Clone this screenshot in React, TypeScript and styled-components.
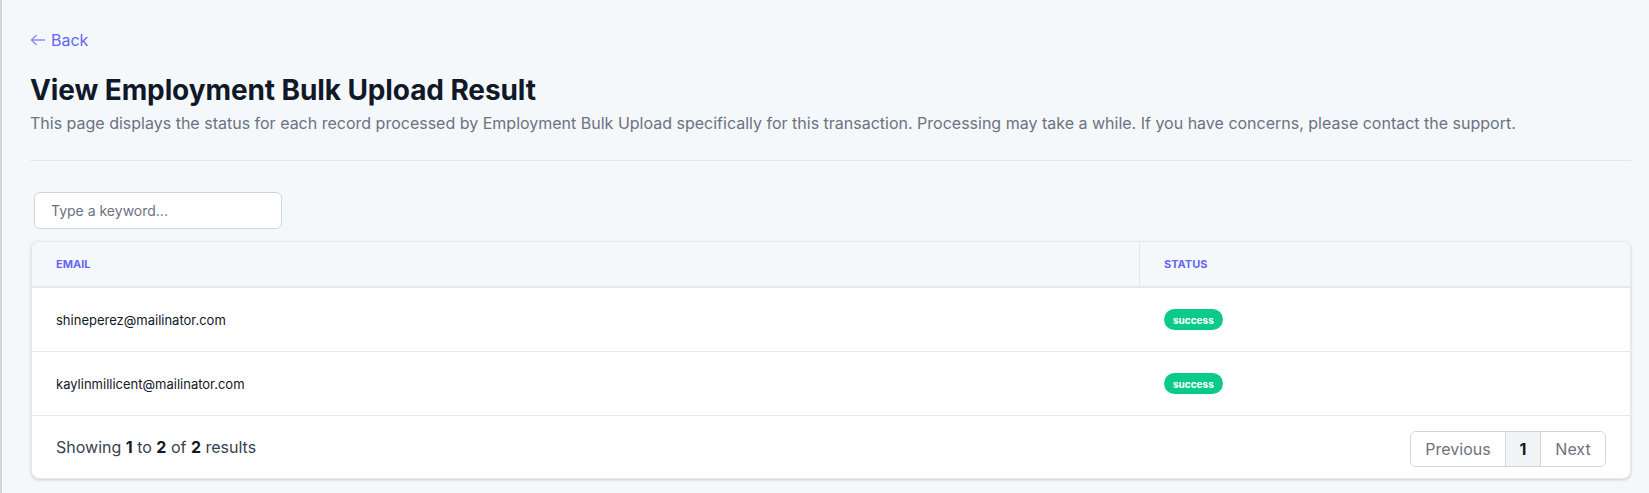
import React from "react";
import styled, { createGlobalStyle } from "styled-components";

const Global = createGlobalStyle`
  html, body { margin: 0; padding: 0; background: #f5f8fb; }
  body { font-family: Inter, "Noto Sans", sans-serif; color: #111827; }
  * { box-sizing: border-box; }
`;

const Shell = styled.div`
  min-height: 493px;
  border-left: 2px solid #d4d4d8;
  box-shadow: inset 1px 0 0 #ffffff;
  padding: 30px 18px 14px 28px;
`;

const BackLink = styled.a`
  display: inline-flex;
  align-items: center;
  gap: 5px;
  font-size: 16px;
  line-height: 20px;
  color: #6366f1;
  text-decoration: none;
  cursor: pointer;
`;

const Title = styled.h1`
  margin: 23px 0 0;
  font-size: 28px;
  line-height: 34px;
  font-weight: 700;
  color: #111827;
  letter-spacing: -0.1px;
`;

const Description = styled.p`
  margin: 5px 0 0;
  font-size: 16px;
  line-height: 22px;
  color: #6b7280;
`;

const Divider = styled.hr`
  margin: 26px 0 0;
  border: 0;
  border-top: 1px solid #e5e7eb;
`;

const SearchInput = styled.input`
  display: block;
  margin: 31px 0 0 4px;
  width: 248px;
  height: 37px;
  padding: 0 16px;
  border: 1px solid #d1d5db;
  border-radius: 6px;
  background: #fff;
  font-family: Inter, sans-serif;
  font-size: 14px;
  color: #111827;
  outline: none;
  &::placeholder { color: #6b7280; }
`;

const Card = styled.div`
  margin: 12px 0 0 1px;
  background: #fff;
  border: 1px solid #e5e7eb;
  border-radius: 8px;
  overflow: hidden;
  box-shadow: 0 1px 3px rgba(0, 0, 0, 0.16);
`;

const Row = styled.div<{ $head?: boolean }>`
  display: grid;
  grid-template-columns: 1108px 1fr;
  height: ${(p) => (p.$head ? "46px" : "64px")};
  background: ${(p) => (p.$head ? "#f5f8fb" : "#fff")};
  border-bottom: ${(p) => (p.$head ? "2px solid #e5e7eb" : "1px solid #e5e7eb")};
`;

const HeadCell = styled.div<{ $divided?: boolean }>`
  display: flex;
  align-items: center;
  padding-left: 24px;
  font-size: 11px;
  font-weight: 700;
  color: #6366f1;
  text-transform: uppercase;
  border-right: ${(p) => (p.$divided ? "1px solid #e5e7eb" : "none")};
`;

const Cell = styled.div`
  display: flex;
  align-items: center;
  padding-left: 24px;
  font-size: 13px;
  color: #111827;
`;

const Badge = styled.span`
  display: inline-flex;
  align-items: center;
  justify-content: center;
  height: 21px;
  padding: 0 9px;
  border-radius: 11px;
  background: #0ccb8a;
  color: #fff;
  font-size: 10px;
  font-weight: 700;
`;

const Footer = styled.div`
  display: flex;
  align-items: center;
  justify-content: space-between;
  height: 62px;
  padding: 0 24px;
`;

const Summary = styled.div`
  font-size: 16px;
  color: #374151;
  b { font-weight: 700; color: #111827; }
`;

const Pager = styled.div`
  display: flex;
  height: 36px;
  border: 1px solid #d1d5db;
  border-radius: 6px;
  overflow: hidden;
  margin-top: 3px;
`;

const PageButton = styled.button<{ $active?: boolean; $w: number }>`
  width: ${(p) => p.$w}px;
  border: 0;
  border-left: 1px solid #d1d5db;
  &:first-child { border-left: 0; }
  background: ${(p) => (p.$active ? "#f3f4f6" : "#fff")};
  color: ${(p) => (p.$active ? "#111827" : "#6b7280")};
  font-family: Inter, sans-serif;
  font-size: 16px;
  font-weight: ${(p) => (p.$active ? 700 : 400)};
  cursor: pointer;
  padding: 0;
`;

const rows = ["shineperez@mailinator.com", "kaylinmillicent@mailinator.com"];

export default function App() {
  return (
    <>
      <Global />
      <Shell>
        <BackLink>
          <svg width="16" height="12" viewBox="0 0 16 12" fill="none" stroke="#8b8cf5" strokeWidth="1.3">
            <path d="M15 6H1.5M6.5 1L1.5 6l5 5" />
          </svg>
          Back
        </BackLink>
        <Title>View Employment Bulk Upload Result</Title>
        <Description>
          This page displays the status for each record processed by Employment Bulk Upload specifically for this
          transaction. Processing may take a while. If you have concerns, please contact the support.
        </Description>
        <Divider />
        <SearchInput placeholder="Type a keyword..." />
        <Card>
          <Row $head>
            <HeadCell $divided>Email</HeadCell>
            <HeadCell>Status</HeadCell>
          </Row>
          {rows.map((email) => (
            <Row key={email}>
              <Cell>{email}</Cell>
              <Cell>
                <Badge>success</Badge>
              </Cell>
            </Row>
          ))}
          <Footer>
            <Summary>
              Showing <b>1</b> to <b>2</b> of <b>2</b> results
            </Summary>
            <Pager>
              <PageButton $w={94}>Previous</PageButton>
              <PageButton $w={35} $active>1</PageButton>
              <PageButton $w={65}>Next</PageButton>
            </Pager>
          </Footer>
        </Card>
      </Shell>
    </>
  );
}
